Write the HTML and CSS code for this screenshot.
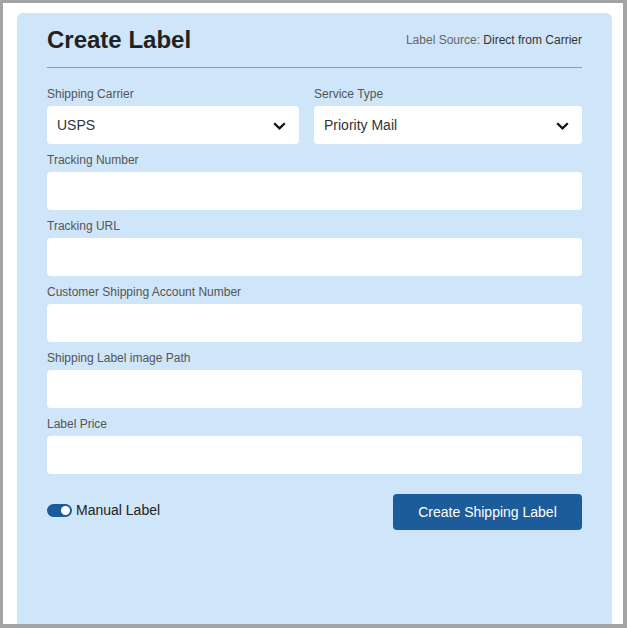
FILE: index.html
```html
<!DOCTYPE html>
<html lang="en">

<head>
    <meta charset="UTF-8">
    <meta name="viewport" content="width=device-width, initial-scale=1.0">
    <title>Create Label</title>
    <link rel="stylesheet" href="styles.css">
</head>

<body>
    <div class="frame">
        <div class="panel">
            <div class="header">
                <h1>Create Label</h1>
                <div class="source">Label Source: <span>Direct from Carrier</span></div>
            </div>

            <div class="form">
                <div class="row">
                    <div class="field">
                        <label>Shipping Carrier</label>
                        <div class="select">
                            <span>USPS</span>
                            <svg width="13" height="8" viewBox="0 0 13 8"><path d="M1.2 1.2 L6.5 6.4 L11.8 1.2" fill="none" stroke="#111" stroke-width="2.2"/></svg>
                        </div>
                    </div>
                    <div class="field">
                        <label>Service Type</label>
                        <div class="select">
                            <span>Priority Mail</span>
                            <svg width="13" height="8" viewBox="0 0 13 8"><path d="M1.2 1.2 L6.5 6.4 L11.8 1.2" fill="none" stroke="#111" stroke-width="2.2"/></svg>
                        </div>
                    </div>
                </div>
                <div class="field">
                    <label>Tracking Number</label>
                    <input type="text">
                </div>
                <div class="field">
                    <label>Tracking URL</label>
                    <input type="text">
                </div>
                <div class="field">
                    <label>Customer Shipping Account Number</label>
                    <input type="text">
                </div>
                <div class="field">
                    <label>Shipping Label image Path</label>
                    <input type="text">
                </div>
                <div class="field">
                    <label>Label Price</label>
                    <input type="text">
                </div>
            </div>

            <div class="footer">
                <div class="toggle-row">
                    <span class="toggle"><span class="knob"></span></span>
                    <span>Manual Label</span>
                </div>
                <button>Create Shipping Label</button>
            </div>
        </div>
    </div>
</body>

</html>
```

FILE: styles.css
```css
* {
    box-sizing: border-box;
}

body {
    margin: 0;
    font-family: "Liberation Sans", Arial, sans-serif;
    color: #333;
}

.frame {
    height: 628px;
    border-style: solid;
    border-color: #a3a3a3;
    border-width: 3px 4px 4px 3px;
    background: #fff;
    padding: 10px 11px 0 14px;
}

.panel {
    height: 100%;
    background: #cfe5f9;
    border-radius: 6px 6px 0 0;
    padding: 13px 30px;
}

.header {
    display: flex;
    justify-content: space-between;
    align-items: flex-start;
    padding-bottom: 13px;
    border-bottom: 1px solid #999;
}

h1 {
    margin: 0;
    font-size: 24px;
    font-weight: bold;
    color: #222;
}

.source {
    margin-top: 7px;
    font-size: 12px;
    color: #666;
}

.source span {
    color: #333;
}

.form {
    margin-top: 18px;
    display: flex;
    flex-direction: column;
    gap: 8px;
}

.row {
    display: grid;
    grid-template-columns: 252px 1fr;
    gap: 15px;
}

.field label {
    display: block;
    font-size: 12px;
    line-height: 16px;
    color: #555;
    margin-bottom: 4px;
}

.field input,
.select {
    display: block;
    width: 100%;
    height: 38px;
    border: none;
    border-radius: 4px;
    background: #fff;
}

.select {
    display: flex;
    align-items: center;
    justify-content: space-between;
    padding: 0 13px 0 10px;
    font-size: 14px;
    color: #333;
}

.select svg {
    margin-top: 1px;
}

.footer {
    margin-top: 20px;
    display: flex;
    justify-content: space-between;
    align-items: flex-start;
}

.toggle-row {
    margin-top: 8px;
    display: flex;
    align-items: center;
    gap: 4px;
    font-size: 14px;
    line-height: 16px;
    color: #222;
}

.toggle {
    position: relative;
    width: 25px;
    height: 13px;
    border-radius: 7px;
    background: #1b5b9a;
}

.knob {
    position: absolute;
    top: 2px;
    right: 2px;
    width: 9px;
    height: 9px;
    border-radius: 50%;
    background: #fff;
}

button {
    width: 189px;
    height: 36px;
    border: none;
    border-radius: 4px;
    background: #1c5c9a;
    color: #fff;
    font-family: inherit;
    font-size: 14px;
}
```
